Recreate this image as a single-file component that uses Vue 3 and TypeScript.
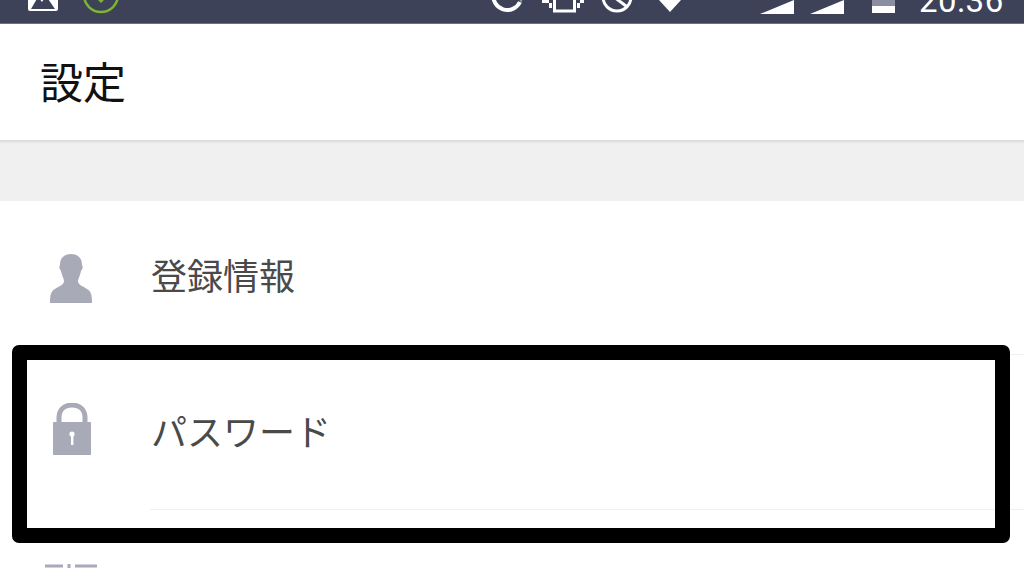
<script setup lang="ts">
const timeText: string = '20:36'
</script>

<template>
  <div class="screen">
    <div class="status">
      <svg class="ic ic-image" width="30" height="24" viewBox="0 0 30 24">
        <rect width="30" height="24" rx="2" fill="#fff" />
        <path d="M3 22 L10 10 L14 15 L18 9 L27 22 Z" fill="#3d4258" />
        <rect x="3" y="3" width="24" height="4" fill="#fff" />
      </svg>
      <svg class="ic ic-check" width="38" height="38" viewBox="0 0 38 38">
        <circle cx="19" cy="19" r="17" fill="none" stroke="#7cb730" stroke-width="2.5" />
        <path d="M11 19 L19 27 L27 19 L23 15 L15 15 Z" fill="#7cb730" />
      </svg>
      <svg class="ic ic-sync" width="34" height="34" viewBox="0 0 34 34">
        <path d="M29 23 A14 14 0 1 1 17 3" fill="none" stroke="#fff" stroke-width="4" />
        <path d="M17 10 V20" stroke="#fff" stroke-width="4" />
        <path d="M27 18 L33 18 L30 24 Z" fill="#8a8fa3" />
      </svg>
      <svg class="ic ic-vib" width="42" height="30" viewBox="0 0 42 30">
        <rect x="12.5" y="2" width="20" height="26" fill="none" stroke="#fff" stroke-width="3" />
        <path d="M0 18.5 H7 M8.5 20 V25 M36.5 20 V25 M38 18.5 H42" stroke="#fff" stroke-width="3" fill="none" />
      </svg>
      <svg class="ic ic-clock" width="32" height="32" viewBox="0 0 32 32">
        <circle cx="16" cy="16" r="14" fill="none" stroke="#fff" stroke-width="3" />
        <path d="M13 16 L25 25" fill="none" stroke="#fff" stroke-width="3" />
      </svg>
      <svg class="ic ic-wifi" width="22" height="12" viewBox="0 0 22 12">
        <path d="M0 0 H22 L11 12 Z" fill="#fff" />
      </svg>
      <svg class="ic ic-sig1" width="34" height="14" viewBox="0 0 34 14">
        <path d="M0 14 L34 0 V14 Z" fill="#fff" />
      </svg>
      <svg class="ic ic-sig2" width="34" height="14" viewBox="0 0 34 14">
        <path d="M0 14 L34 0 V14 Z" fill="#fff" />
      </svg>
      <div class="battery"><div class="battery-level"></div></div>
      <span class="time">{{ timeText }}</span>
    </div>

    <header class="header"><h1 class="title">設定</h1></header>
    <div class="band"></div>

    <ul class="list">
      <li class="row row-one">
        <div class="icon-cell">
          <svg width="44" height="50" viewBox="0 0 44 50">
            <path d="M22 0 C29 0 33 4 33 11 C34 12 34 15 32 17 C31 22 29 25 29 27 C29 31 34 32 38 35 C42 37 43 41 43 49 H1 C1 41 2 37 6 35 C10 32 15 31 15 27 C15 25 13 22 12 17 C10 15 10 12 11 11 C11 4 15 0 22 0 Z" fill="#a8aab8" />
          </svg>
        </div>
        <div class="label-cell"><span class="label">登録情報</span></div>
      </li>
      <li class="row row-two">
        <div class="icon-cell">
          <svg width="40" height="53" viewBox="0 0 40 53">
            <path d="M7 22 V15 C7 7 12 2 20 2 C28 2 33 7 33 15 V22" fill="none" stroke="#a8aab8" stroke-width="5" />
            <rect x="1" y="19" width="38" height="33" rx="1" fill="#a8aab8" />
            <circle cx="20" cy="31" r="2.6" fill="#fff" />
            <rect x="19" y="32" width="2.4" height="10" fill="#fff" />
          </svg>
        </div>
        <div class="label-cell"><span class="label">パスワード</span></div>
      </li>
      <li class="row row-three">
        <div class="icon-cell">
          <svg width="52" height="40" viewBox="0 0 52 40">
            <path d="M0 2 H18 M30 2 H52 M24 0 V6" stroke="#a8aab8" stroke-width="3" fill="none" />
          </svg>
        </div>
      </li>
    </ul>

    <div class="highlight"></div>
  </div>
</template>

<style scoped>
.screen {
  position: relative;
  width: 1024px;
  height: 568px;
  overflow: hidden;
  background: #fff;
  font-family: "Noto Sans CJK JP", "Noto Sans", sans-serif;
}
.status {
  display: flex;
  align-items: flex-end;
  height: 24px;
  overflow: hidden;
  background: #3d4258;
  position: relative;
  box-shadow: inset 0 -1px 0 #6f7280;
}
.ic { flex: none; display: block; }
.ic-image { margin-left: 28px; margin-bottom: 13px; }
.ic-check { margin-left: 24px; margin-bottom: 10px; }
.ic-sync { margin-left: 371px; margin-bottom: 11px; }
.ic-vib { margin-left: 17px; margin-bottom: 11px; }
.ic-clock { margin-left: 17px; margin-bottom: 11px; }
.ic-wifi { margin-left: 26px; margin-bottom: 12px; }
.ic-sig1 { margin-left: 79px; margin-bottom: 10px; }
.ic-sig2 { margin-left: 16px; margin-bottom: 10px; }
.battery {
  flex: none;
  width: 23px;
  height: 13px;
  margin-left: 28px;
  margin-bottom: 11px;
  background: #fff;
}
.battery-level { height: 6px; background: #8b8fa1; }
.time {
  flex: none;
  margin-left: 24px;
  margin-bottom: 12px;
  font-family: Roboto, sans-serif;
  font-size: 33px;
  font-weight: 400;
  line-height: 22px;
  color: #fff;
  letter-spacing: 0.5px;
}
.header {
  display: flex;
  align-items: center;
  height: 116px;
  padding-left: 40px;
  padding-bottom: 5px;
  box-sizing: border-box;
  background: #fff;
}
.title {
  margin: 0;
  font-size: 43px;
  font-weight: 400;
  line-height: 60px;
  color: #111;
}
.band {
  height: 61px;
  box-sizing: border-box;
  background: linear-gradient(#d5d5d5 0, #e6e6e6 2px, #f0f0f0 4px);
}
.list { margin: 0; padding: 0; list-style: none; }
.row { display: flex; height: 154px; background: #fff; }
.row-two { height: 155px; }
.icon-cell {
  flex: none;
  width: 150px;
  box-sizing: border-box;
  display: flex;
  padding-left: 50px;
}
.row-one .icon-cell { padding-left: 49px; padding-top: 53px; }
.row-two .icon-cell { padding-left: 52px; padding-top: 48px; }
.row-three .icon-cell { padding-left: 45px; padding-top: 54px; }
.label-cell {
  flex: 1;
  box-sizing: border-box;
  border-bottom: 1px solid #f0f0f0;
  padding-left: 1px;
}
.row-one .label-cell { padding-top: 47px; }
.row-two .label-cell { padding-top: 49px; }
.label { font-size: 36px; line-height: 52px; color: #4a4a4a; }
.highlight {
  position: absolute;
  left: 12px;
  top: 345px;
  width: 998px;
  height: 198px;
  box-sizing: border-box;
  border: 15px solid #000;
  border-radius: 7px;
}
</style>

<style>
html, body { margin: 0; background: #fff; }
</style>
